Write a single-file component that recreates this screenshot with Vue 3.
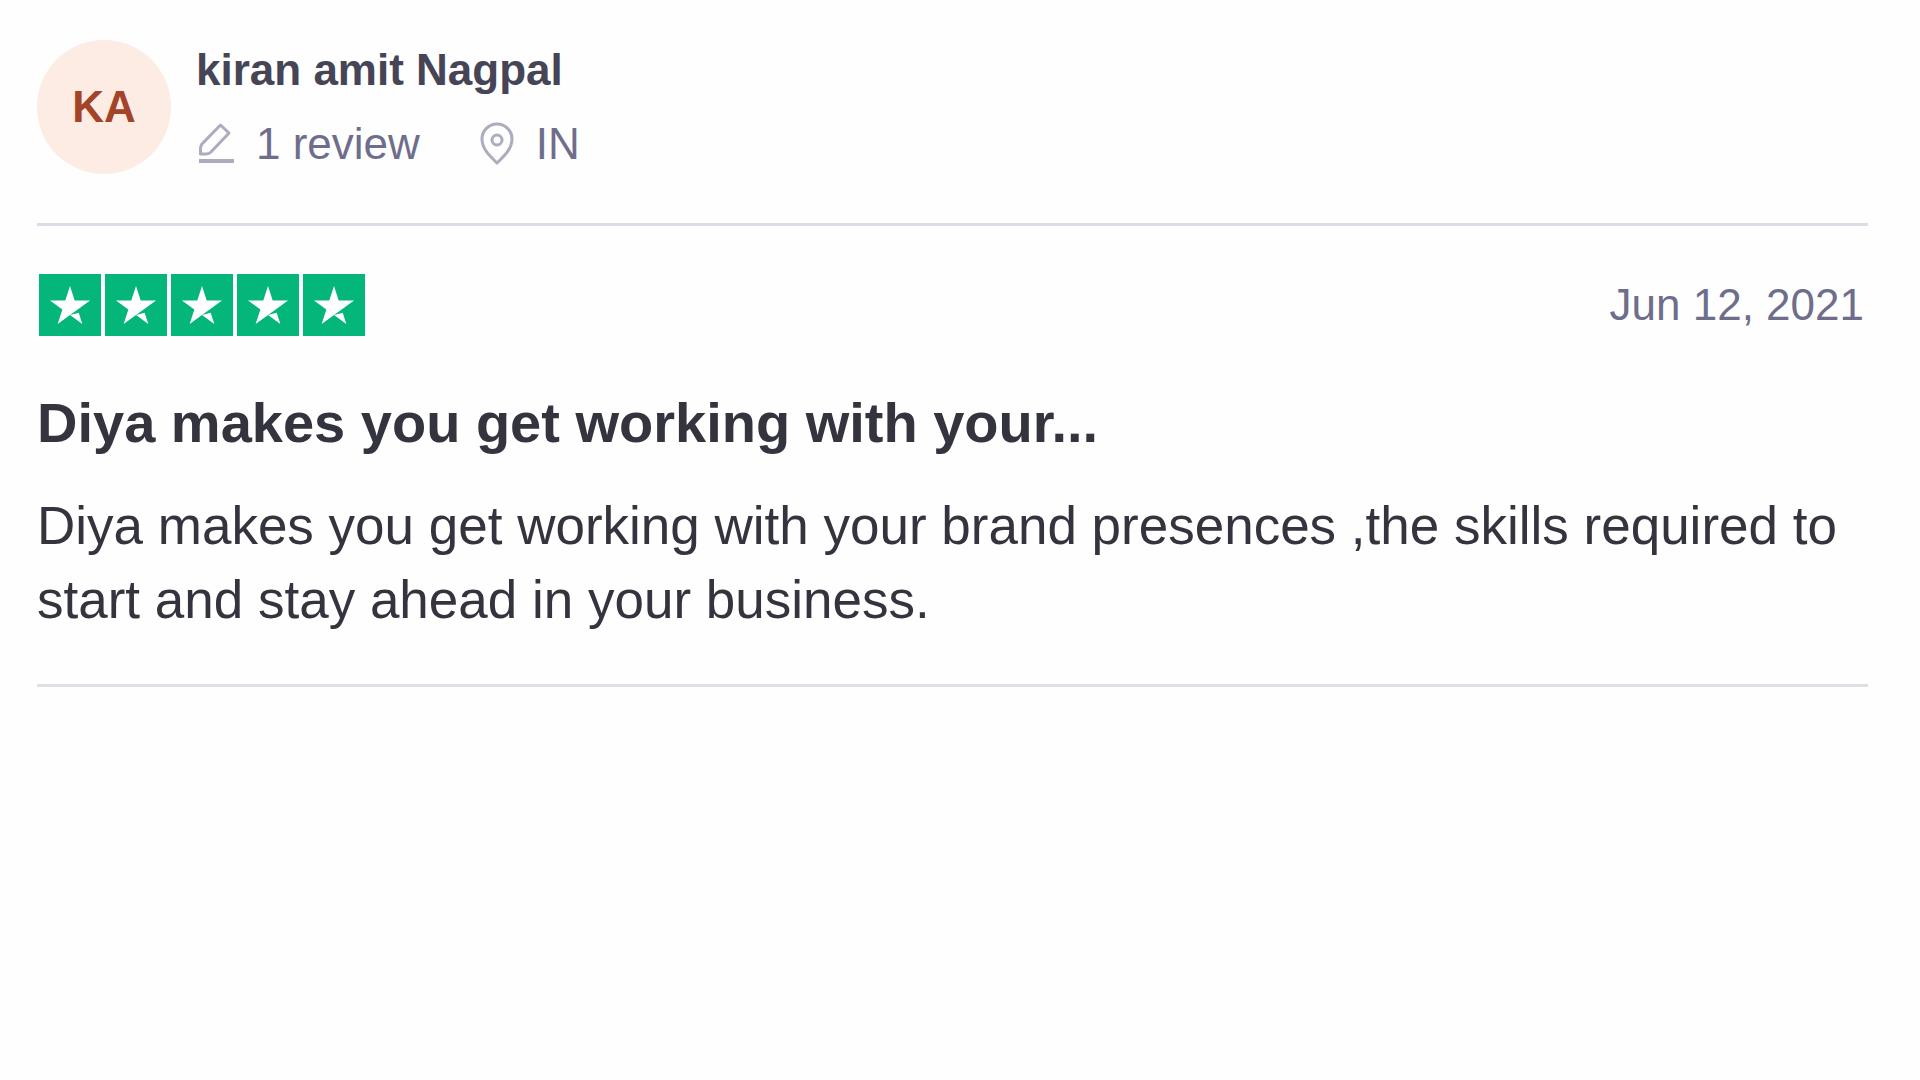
<script setup>
const review = {
  initials: 'KA',
  name: 'kiran amit Nagpal',
  count: '1 review',
  country: 'IN',
  rating: 5,
  date: 'Jun 12, 2021',
  title: 'Diya makes you get working with your...',
  body: 'Diya makes you get working with your brand presences ,the skills required to start and stay ahead in your business.',
}
</script>

<template>
  <article class="review">
    <header class="consumer">
      <div class="avatar" aria-hidden="true">{{ review.initials }}</div>
      <div class="details">
        <div class="name">{{ review.name }}</div>
        <div class="meta">
          <span class="meta-item">
            <svg class="icon" width="38" height="44" viewBox="-2 0 38 44" aria-hidden="true">
              <path d="M22.5 3 L31 11 L13 30 Q11 32 8 32 H2.500 V26 Q2.500 24 4 22 Z" />
              <path class="underline" d="M1 39 H36" />
            </svg>
            {{ review.count }}
          </span>
          <span class="meta-item">
            <svg class="icon" width="34" height="44" viewBox="1 0 34 44" aria-hidden="true">
              <path d="M18 41 C13 36 3 28 3 17 A15 15 0 0 1 33 17 C33 28 23 36 18 41 Z" />
              <circle cx="18" cy="18" r="5" />
            </svg>
            {{ review.country }}
          </span>
        </div>
      </div>
    </header>

    <section class="content">
      <div class="rating-row">
        <div class="stars" role="img" :aria-label="`${review.rating} out of 5 stars`">
          <svg v-for="n in review.rating" :key="n" class="star" viewBox="-2 -2 52 52">
            <path d="M40.8 20.2H27.95L24 8l-3.97 12.2H7.2l10.4 7.55-3.97 12.2 10.4-7.55 6.4-4.65z" />
            <path d="M24 32.4l7.3-1.85 3.05 9.4z" />
          </svg>
        </div>
        <time class="date" datetime="2021-06-12">{{ review.date }}</time>
      </div>
      <h2 class="title">{{ review.title }}</h2>
      <p class="body">{{ review.body }}</p>
    </section>
  </article>
</template>

<style>
body {
  margin: 0;
  background: #fefefe;
}
</style>

<style scoped>
.review {
  margin: 0 52px 0 37px;
  padding-top: 40px;
  font-family: "Liberation Sans", Arial, Helvetica, sans-serif;
  font-size: 44px;
  color: #34343f;
}

.consumer {
  display: flex;
  gap: 25px;
  padding-bottom: 49px;
  border-bottom: 3px solid #dcdce6;
}

.avatar {
  display: flex;
  align-items: center;
  justify-content: center;
  flex: none;
  width: 134px;
  height: 134px;
  border-radius: 50%;
  background: #fcece4;
  color: #a34328;
  font-weight: 700;
}

.details {
  display: flex;
  flex-direction: column;
}

.name {
  line-height: 60px;
  font-weight: 700;
  color: #464556;
}

.meta {
  display: flex;
  gap: 60px;
  padding-top: 13px;
  line-height: 61px;
  color: #6e6e8c;
}

.meta-item {
  display: flex;
  align-items: center;
  gap: 22px;
}

.icon {
  flex: none;
  fill: none;
  stroke: #acacbf;
  stroke-width: 3;
  stroke-linejoin: round;
}

.underline {
  stroke-width: 4;
}

.content {
  padding: 47px 0;
  border-bottom: 3px solid #dfdfe6;
}

.rating-row {
  display: flex;
  align-items: center;
  justify-content: space-between;
  height: 64px;
}

.stars {
  display: flex;
  gap: 4px;
  padding-left: 2px;
}

.star {
  width: 62px;
  height: 62px;
  background: #04b67a;
  fill: #fff;
}

.date {
  padding-right: 4px;
  color: #6e6e8c;
}

.title {
  margin: 50px 0 30px;
  font-size: 56px;
  line-height: 72px;
  font-weight: 700;
}

.body {
  margin: 0;
  font-size: 53px;
  line-height: 74px;
}
</style>
